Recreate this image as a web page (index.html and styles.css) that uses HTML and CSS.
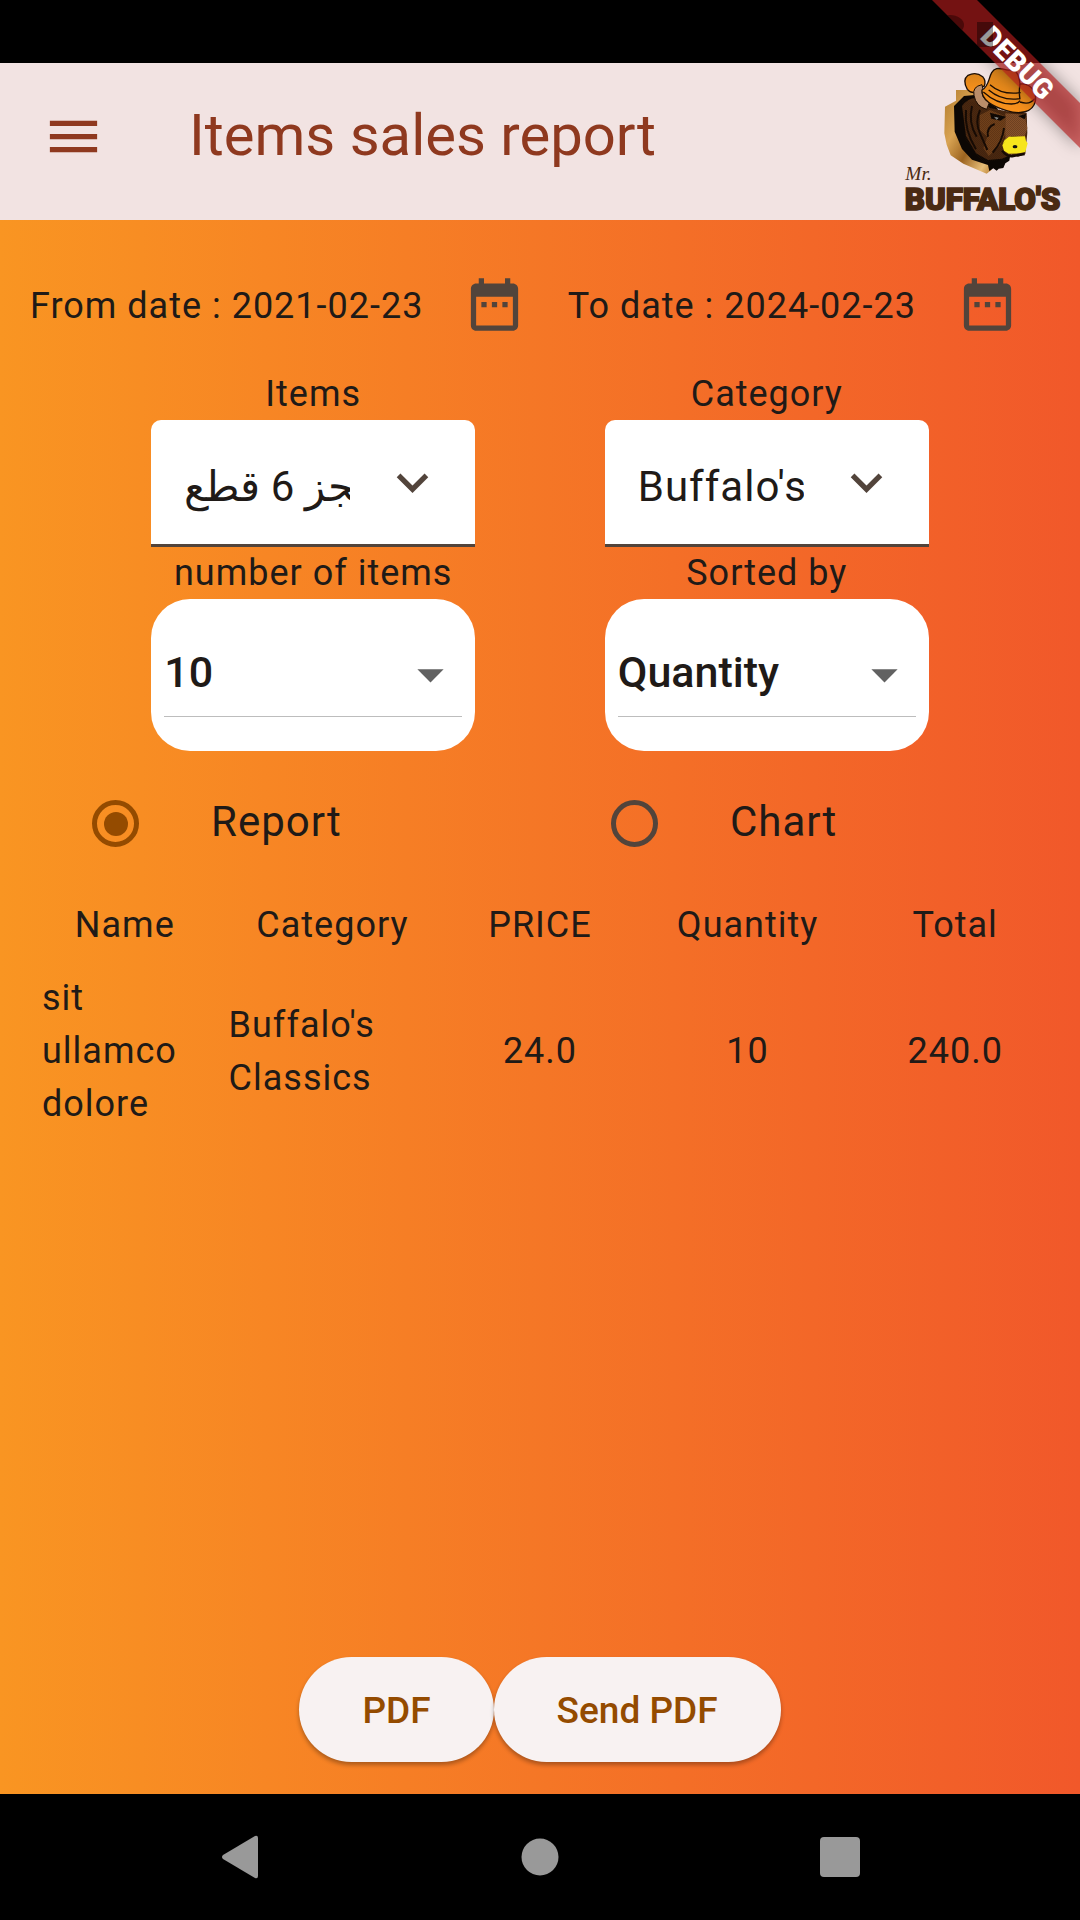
FILE: index.html
```html
<!DOCTYPE html>
<html lang="en">
<head>
<meta charset="utf-8">
<meta name="viewport" content="width=device-width, initial-scale=1">
<title>Items sales report</title>
<link rel="stylesheet" href="styles.css">
</head>
<body>
<div class="status-bar"></div>
<header class="app-bar">
  <button class="menu-button" type="button" aria-label="Open menu">
    <svg class="icon" viewBox="0 0 24 24"><path d="M3 18h18v-2H3v2zm0-5h18v-2H3v2zm0-7v2h18V6H3z"/></svg>
  </button>
  <h1 class="title">Items sales report</h1>
  <svg class="logo" viewBox="75 204 480 441" role="img" aria-label="Mr. Buffalo's">
    <defs>
      <linearGradient id="wood" x1="0" y1="0" x2="1" y2="1">
        <stop offset="0" stop-color="#b07a2c"/><stop offset=".35" stop-color="#d9a352"/><stop offset=".6" stop-color="#9c6420"/><stop offset=".85" stop-color="#e6bd78"/><stop offset="1" stop-color="#b5782a"/>
      </linearGradient>
      <linearGradient id="hat" x1="0" y1="0" x2="0" y2="1">
        <stop offset="0" stop-color="#d9831a"/><stop offset="1" stop-color="#fb921c"/>
      </linearGradient>
      <pattern id="grain" width="6" height="6" patternUnits="userSpaceOnUse"><path d="M0 0h3v3H0zM3 3h3v3H3z" fill="#2a1406"/></pattern>
    </defs>
    <path d="M228 270l58 0 54 220-6 20-14 11-70-30-38-25-12-32-7-34 2-80 33-18z" fill="url(#wood)"/>
    <path d="M222 318l30-30 40-4 60 40 40 134-4 24-12 8-6 14-14 2-6 6-10-7-12 8-4-18-48-16-30-32-22-52z" fill="#0c0704"/>
    <path d="M246 318q20-26 44-24l40 30 50 10 60 4 2 60-6 64-22 8-20-6-28 12-42 4-36-20-30-52z" fill="#4a2810"/>
    <path d="M300 345l30-15 44 18 4 50-20 40-32 30-16-24 12-34-22-20z" fill="#70401a"/>
    <path d="M376 340l58 4 8 40-8 26-40-2-18 14z" fill="#85502a"/>
    <path d="M258 330q-6 60 30 118M276 318q-12 50 14 92M300 330q-16 36 0 70l22 50M344 372q-26 10-20 38M372 384q-4 40-34 74" fill="none" stroke="#140a04" stroke-width="6"/>
    <path d="M330 338l48 12-16 12-28-6z" fill="#0c0704"/>
    <path d="M342 350l14 3-6 6z" fill="#9aa0a0"/>
    <path d="M414 348l24-6-4 16z" fill="#0c0704"/>
    <path d="M367 436l6-16 14-10 48-1 3 14 5 7-7 26-18 4-32 1-14-9z" fill="#f6e51c"/>
    <path d="M366 452q14 20 34 16l34-6" fill="none" stroke="#140a04" stroke-width="7"/>
    <ellipse cx="405" cy="440" rx="7" ry="5" fill="#111"/>
    <path d="M246 300l110 20 84 24v64h-54l-20 30 10 40-70 10-50-70z" fill="url(#grain)" opacity=".25"/>
    <path d="M262 268q-16-28 2-42 24-12 44 4 12 14 4 30-22-4-30 18-12 0-20-10z" fill="url(#hat)" stroke="#1d0e04" stroke-width="4"/>
    <path d="M306 254q-30 6-24 32 6 34 38 42l8-20q-28-16-20-42z" fill="#b98d6a" stroke="#1d0e04" stroke-width="3"/>
    <path d="M306 270C334 256 322 214 350 206C372 202 378 216 398 208C414 214 418 232 420 252C444 248 472 268 466 304C458 338 420 344 380 332C340 320 304 302 306 270z" fill="url(#hat)" stroke="#1d0e04" stroke-width="4"/>
    <path d="M330 254q36 32 92 24M326 270q40 34 94 26M420 252q-4 24 0 46M420 306q30 10 44-10M310 276q40 36 84 36 20 0 26-10" fill="none" stroke="#1d0e04" stroke-width="4"/>
    <text class="logo-script" x="76" y="541">Mr.</text>
    <text class="logo-text" x="74" y="629">BUFFALO'S</text>
  </svg>
</header>

<main class="report">
  <section class="dates">
    <div class="date">
      <span>From date : 2021-02-23</span>
      <button class="icon-button" type="button" aria-label="Pick from date">
        <svg class="icon" viewBox="0 0 24 24"><path d="M9 11H7v2h2v-2zm4 0h-2v2h2v-2zm4 0h-2v2h2v-2zm2-7h-1V2h-2v2H8V2H6v2H5c-1.11 0-1.99.9-1.99 2L3 20c0 1.1.89 2 2 2h14c1.1 0 2-.9 2-2V6c0-1.1-.9-2-2-2zm0 16H5V9h14v11z"/></svg>
      </button>
    </div>
    <div class="date">
      <span>To date : 2024-02-23</span>
      <button class="icon-button" type="button" aria-label="Pick to date">
        <svg class="icon" viewBox="0 0 24 24"><path d="M9 11H7v2h2v-2zm4 0h-2v2h2v-2zm4 0h-2v2h2v-2zm2-7h-1V2h-2v2H8V2H6v2H5c-1.11 0-1.99.9-1.99 2L3 20c0 1.1.89 2 2 2h14c1.1 0 2-.9 2-2V6c0-1.1-.9-2-2-2zm0 16H5V9h14v11z"/></svg>
      </button>
    </div>
  </section>

  <section class="filters">
    <div class="field">
      <label for="items">Items</label>
      <div class="combo">
        <input id="items" class="combo-input" type="text" value="ـجز 6 قطع">
        <button class="combo-button" type="button" aria-label="Show items"><svg class="icon" viewBox="0 0 24 24"><path d="M7.41 8.59L12 13.17l4.59-4.58L18 10l-6 6-6-6 1.41-1.41z"/></svg></button>
      </div>
    </div>
    <div class="field">
      <label for="category">Category</label>
      <div class="combo">
        <input id="category" class="combo-input" type="text" value="Buffalo's Classics">
        <button class="combo-button" type="button" aria-label="Show categories"><svg class="icon" viewBox="0 0 24 24"><path d="M7.41 8.59L12 13.17l4.59-4.58L18 10l-6 6-6-6 1.41-1.41z"/></svg></button>
      </div>
    </div>
    <div class="field">
      <label for="count">number of items</label>
      <div class="picker">
        <select id="count" class="picker-select"><option>10</option></select>
        <svg class="icon picker-arrow" viewBox="0 0 24 24"><path d="M7 10l5 5 5-5z"/></svg>
      </div>
    </div>
    <div class="field">
      <label for="sort">Sorted by</label>
      <div class="picker">
        <select id="sort" class="picker-select"><option>Quantity</option></select>
        <svg class="icon picker-arrow" viewBox="0 0 24 24"><path d="M7 10l5 5 5-5z"/></svg>
      </div>
    </div>
  </section>

  <section class="views">
    <label class="view"><input class="radio" type="radio" name="view" checked>Report</label>
    <label class="view"><input class="radio" type="radio" name="view">Chart</label>
  </section>

  <table class="sales">
    <thead>
      <tr><th>Name</th><th>Category</th><th>PRICE</th><th>Quantity</th><th>Total</th></tr>
    </thead>
    <tbody>
      <tr><td class="name">sit ullamco dolore</td><td class="category">Buffalo's Classics</td><td>24.0</td><td>10</td><td>240.0</td></tr>
    </tbody>
  </table>

  <div class="actions">
    <button class="pill" type="button">PDF</button>
    <button class="pill" type="button">Send PDF</button>
  </div>
</main>

<nav class="system-nav">
  <button class="nav-button" type="button" aria-label="Back"><svg class="nav-icon" viewBox="0 0 48 48"><path d="M42 5v38q0 3-3 2L7 26q-2-2 0-4L39 3q3-1 3 2z"/></svg></button>
  <button class="nav-button" type="button" aria-label="Home"><svg class="nav-icon" viewBox="0 0 48 48"><circle cx="24" cy="24" r="18.500"/></svg></button>
  <button class="nav-button" type="button" aria-label="Recent apps"><svg class="nav-icon" viewBox="0 0 48 48"><rect x="4" y="4" width="40" height="40" rx="4"/></svg></button>
</nav>

<svg class="debug-banner" viewBox="0 0 160 160" aria-hidden="true">
  <defs><clipPath id="band"><path d="M12 0h45l103 103v45z"/></clipPath></defs>
  <path class="debug-band" d="M12 0h45l103 103v45z"/>
  <ellipse cx="30" cy="25" rx="14" ry="10" fill="#200" opacity=".5" clip-path="url(#band)"/>
  <text class="debug-text" x="98" y="72" transform="rotate(45 97 62)">DEBUG</text>
  <path d="M57 22h16v25H57z" fill="#000" opacity=".4" clip-path="url(#band)"/>
</svg>
</body>
</html>
```
FILE: styles.css
```css
* {
  box-sizing: border-box;
}

body {
  position: relative;
  display: flex;
  flex-direction: column;
  min-height: 100vh;
  margin: 0;
  overflow-x: hidden;
  color: #201a17;
  font-family: Roboto, "Liberation Sans", sans-serif;
  font-size: 36px;
  line-height: 53px;
  letter-spacing: 1px;
}

button {
  padding: 0;
  border: 0;
  background: none;
  color: inherit;
  font: inherit;
}

.icon {
  display: block;
  width: 63px;
  height: 63px;
  fill: currentColor;
}

.status-bar {
  height: 63px;
  background: #000;
}

.app-bar {
  display: flex;
  align-items: center;
  height: 157px;
  padding: 0 15px 0 42px;
  background: #f2e3e2;
  color: #8f391f;
}

.title {
  flex: 1;
  margin: 0 0 0 84px;
  padding-bottom: 14px;
  font-size: 58px;
  font-weight: 400;
  line-height: 74px;
  letter-spacing: 0;
}

.menu-button {
  margin-bottom: 10px;
}

.logo {
  width: 160px;
  height: 147px;
  overflow: visible;
}

.logo-text {
  fill: #4a2a12;
  stroke: #4a2a12;
  stroke-width: 5px;
  font-size: 94px;
  font-weight: 900;
  letter-spacing: 0;
}

.logo-script {
  fill: #4a2a12;
  font-family: "Liberation Serif", serif;
  font-size: 58px;
  font-style: italic;
  letter-spacing: 0;
}

.report {
  display: flex;
  flex: 1;
  flex-direction: column;
  padding: 21px 0 32px;
  background: linear-gradient(90deg, #f99522, #f1582a);
}

.dates {
  display: flex;
  justify-content: space-between;
  padding: 0 29px 0 30px;
}

.date {
  display: flex;
  align-items: center;
  gap: 8px;
}

.date span {
  padding-top: 3px;
}

.icon-button {
  padding: 32px;
  color: #52443b;
}

.filters {
  display: grid;
  grid-template-columns: 30% 30%;
  column-gap: 12%;
  justify-content: center;
}

.field label {
  display: block;
  text-align: center;
  line-height: 52px;
}

.combo {
  display: flex;
  align-items: center;
  height: 127px;
  padding-left: 33px;
  border-bottom: 3px solid #52443b;
  border-radius: 10px 10px 0 0;
  background: #fff;
}

.combo-input {
  flex: 1;
  min-width: 0;
  padding: 8px 0 0;
  border: 0;
  background: none;
  color: inherit;
  font: inherit;
  font-size: 42px;
  line-height: 63px;
  letter-spacing: 1px;
}

.combo-button {
  padding: 0 31px;
  color: #52443b;
}

.picker {
  position: relative;
  height: 152px;
  padding: 32px 13px;
  border-radius: 39px;
  background: #fff;
}

.picker-select {
  width: 100%;
  height: 86px;
  padding: 0 0 2px;
  border: 0;
  border-bottom: 1px solid #bdbdbd;
  appearance: none;
  background: none;
  color: inherit;
  font: inherit;
  font-size: 43px;
  font-weight: 500;
}

.picker-arrow {
  position: absolute;
  top: 44px;
  right: 13px;
  color: #616161;
  pointer-events: none;
}

.views {
  display: grid;
  grid-template-columns: 1fr 1fr;
  padding: 41px 21px 43px;
}

.view {
  display: flex;
  align-items: center;
  gap: 72px;
  padding-left: 71px;
  font-size: 42px;
  line-height: 60px;
}

.radio {
  display: grid;
  place-items: center;
  width: 47px;
  height: 47px;
  margin: 3px 0 0;
  border: 5px solid #52443b;
  border-radius: 50%;
  appearance: none;
}

.radio:checked {
  border-color: #944b00;
}

.radio:checked::before {
  width: 24px;
  height: 24px;
  border-radius: 50%;
  background: #944b00;
  content: "";
}

.sales {
  width: calc(100% - 42px);
  margin: 0 21px;
  border-spacing: 0;
  table-layout: fixed;
}

.sales th {
  padding: 4px 0 20px;
  font-weight: 400;
}

.sales td {
  padding: 0;
  text-align: center;
}

.sales .name {
  padding-left: 21px;
  text-align: left;
}

.sales .category {
  text-align: left;
}

.actions {
  display: flex;
  justify-content: center;
  margin-top: auto;
}

.pill {
  height: 105px;
  padding: 2px 63px 0;
  border-radius: 53px;
  background: #f8f2f2;
  box-shadow: 0 3px 4px rgba(0, 0, 0, 0.3);
  color: #944b00;
  font-size: 37px;
  font-weight: 500;
}

.system-nav {
  display: flex;
  justify-content: center;
  align-items: center;
  gap: 252px;
  height: 126px;
  background: #000;
  color: #999;
}

.nav-icon {
  display: block;
  width: 48px;
  height: 48px;
  fill: currentColor;
}

.debug-banner {
  position: absolute;
  top: 0;
  right: 0;
  width: 160px;
  height: 160px;
}

.debug-band {
  fill: rgba(183, 28, 28, 0.63);
  filter: drop-shadow(0 0 8px rgba(0, 0, 0, 0.6));
}

.debug-text {
  fill: #fff;
  font-size: 28px;
  font-weight: 900;
  letter-spacing: 0;
  text-anchor: middle;
}
```
